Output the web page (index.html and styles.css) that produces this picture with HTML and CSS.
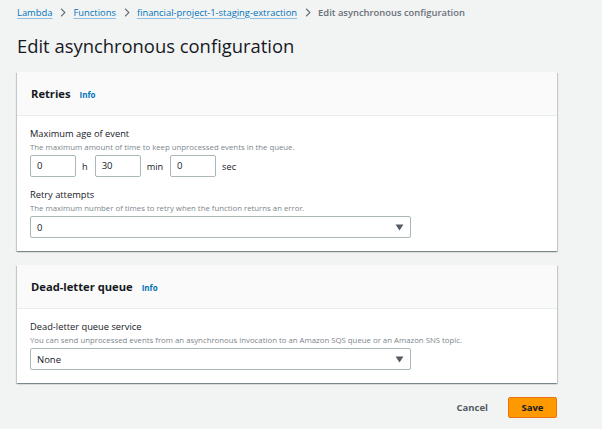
FILE: index.html
```html
<!DOCTYPE html>
<html>
<head>
<meta charset="utf-8">
<link rel="stylesheet" href="styles.css">
</head>
<body>
<div class="page">
  <nav class="crumbs">
    <a class="crumb">Lambda</a>
    <svg class="chev" viewBox="0 0 8 12" width="6" height="9"><path d="M1.5 1 L6.5 6 L1.5 11" fill="none" stroke="#687078" stroke-width="1.5"/></svg>
    <a class="crumb">Functions</a>
    <svg class="chev" viewBox="0 0 8 12" width="6" height="9"><path d="M1.5 1 L6.5 6 L1.5 11" fill="none" stroke="#687078" stroke-width="1.5"/></svg>
    <a class="crumb">financial-project-1-staging-extraction</a>
    <svg class="chev" viewBox="0 0 8 12" width="6" height="9"><path d="M1.5 1 L6.5 6 L1.5 11" fill="none" stroke="#687078" stroke-width="1.5"/></svg>
    <span class="crumb-current">Edit asynchronous configuration</span>
  </nav>
  <h1 class="title">Edit asynchronous configuration</h1>

  <section class="card card-retries">
    <header class="card-head"><h2>Retries</h2><a class="info">Info</a></header>
    <div class="card-body">
      <div class="field">
        <div class="label">Maximum age of event</div>
        <div class="desc">The maximum amount of time to keep unprocessed events in the queue.</div>
        <div class="time-row">
          <div class="input">0</div><span class="unit">h</span>
          <div class="input">30</div><span class="unit">min</span>
          <div class="input">0</div><span class="unit">sec</span>
        </div>
      </div>
      <div class="field">
        <div class="label">Retry attempts</div>
        <div class="desc">The maximum number of times to retry when the function returns an error.</div>
        <div class="select"><span>0</span><svg viewBox="0 0 10 8" width="9" height="7"><path d="M0.5 0.5 H9.5 L5 7.5 Z" fill="#545b64"/></svg></div>
      </div>
    </div>
  </section>

  <section class="card card-dlq">
    <header class="card-head"><h2>Dead-letter queue</h2><a class="info">Info</a></header>
    <div class="card-body">
      <div class="field">
        <div class="label">Dead-letter queue service</div>
        <div class="desc">You can send unprocessed events from an asynchronous invocation to an Amazon SQS queue or an Amazon SNS topic.</div>
        <div class="select"><span>None</span><svg viewBox="0 0 10 8" width="9" height="7"><path d="M0.5 0.5 H9.5 L5 7.5 Z" fill="#545b64"/></svg></div>
      </div>
    </div>
  </section>

  <div class="actions">
    <button class="btn-cancel">Cancel</button>
    <button class="btn-save">Save</button>
  </div>
</div>
</body>
</html>
```
FILE: styles.css
```css
* { box-sizing: border-box; margin: 0; padding: 0; }
html, body { background: #f2f3f3; }
body {
  font-family: "Open Sans", "Noto Sans", sans-serif;
  color: #16191f;
  width: 602px;
  height: 429px;
  overflow: hidden;
}
.page {
  padding: 0 45px 0 17px;
  display: flex;
  flex-direction: column;
}
.crumbs {
  height: 24px;
  display: flex;
  align-items: center;
  font-size: 9.4px;
}
.crumb {
  color: #0073bb;
  text-decoration: underline;
  text-decoration-color: #8dbde0;
  text-underline-offset: 2px;
}
.chev { margin: 0 7px 0 8px; }
.crumb-current {
  color: #687078;
  font-weight: 600;
}
.title {
  margin-top: 10px;
  font-size: 18.4px;
  line-height: 24px;
  font-weight: 400;
  color: #16191f;
}
.card {
  margin-top: 14px;
  background: #fff;
  box-shadow: 0 1px 1px 0 rgba(0,28,36,0.3), 1px 1px 1px 0 rgba(0,28,36,0.15), -1px 1px 1px 0 rgba(0,28,36,0.15);
  display: flex;
  flex-direction: column;
}
.card-head {
  height: 44px;
  background: #fafafa;
  border-bottom: 1px solid #eaeded;
  display: flex;
  align-items: center;
  padding-left: 14px;
  gap: 9px;
}
.card-head h2 {
  font-size: 11.2px;
  font-weight: 700;
  color: #16191f;
}
.info {
  font-size: 8px;
  font-weight: 700;
  color: #0073bb;
  margin-top: 2px;
}
.card-body {
  padding: 11px 14px 13px 13px;
  display: flex;
  flex-direction: column;
  gap: 11px;
}
.field { display: flex; flex-direction: column; }
.label {
  font-size: 9.3px;
  line-height: 14px;
  color: #16191f;
}
.desc {
  font-size: 7.8px;
  line-height: 13px;
  color: #7d868c;
  margin-bottom: 1px;
}
.time-row {
  display: flex;
  align-items: center;
  height: 22px;
}
.input {
  width: 46px;
  height: 22px;
  border: 1px solid #aab7b8;
  border-radius: 2px;
  font-size: 9.5px;
  line-height: 20px;
  padding-left: 6px;
  background: #fff;
}
.unit {
  font-size: 9.2px;
  color: #16191f;
  margin: 0 7px 0 6px;
}
.select {
  width: 381px;
  height: 22px;
  border: 1px solid #aab7b8;
  border-radius: 2px;
  display: flex;
  align-items: center;
  justify-content: space-between;
  padding: 0 6px 0 6px;
  font-size: 9.5px;
}
.actions {
  margin-top: 14px;
  display: flex;
  justify-content: flex-end;
  align-items: center;
  gap: 20px;
}
button {
  font-family: inherit;
  font-weight: 700;
  font-size: 9.5px;
  border: none;
  background: none;
}
.btn-cancel { color: #545b64; }
.btn-save {
  width: 49px;
  height: 21px;
  background: #ff9900;
  color: #16191f;
  border: 1px solid #ec7211;
  border-radius: 2px;
}
```
